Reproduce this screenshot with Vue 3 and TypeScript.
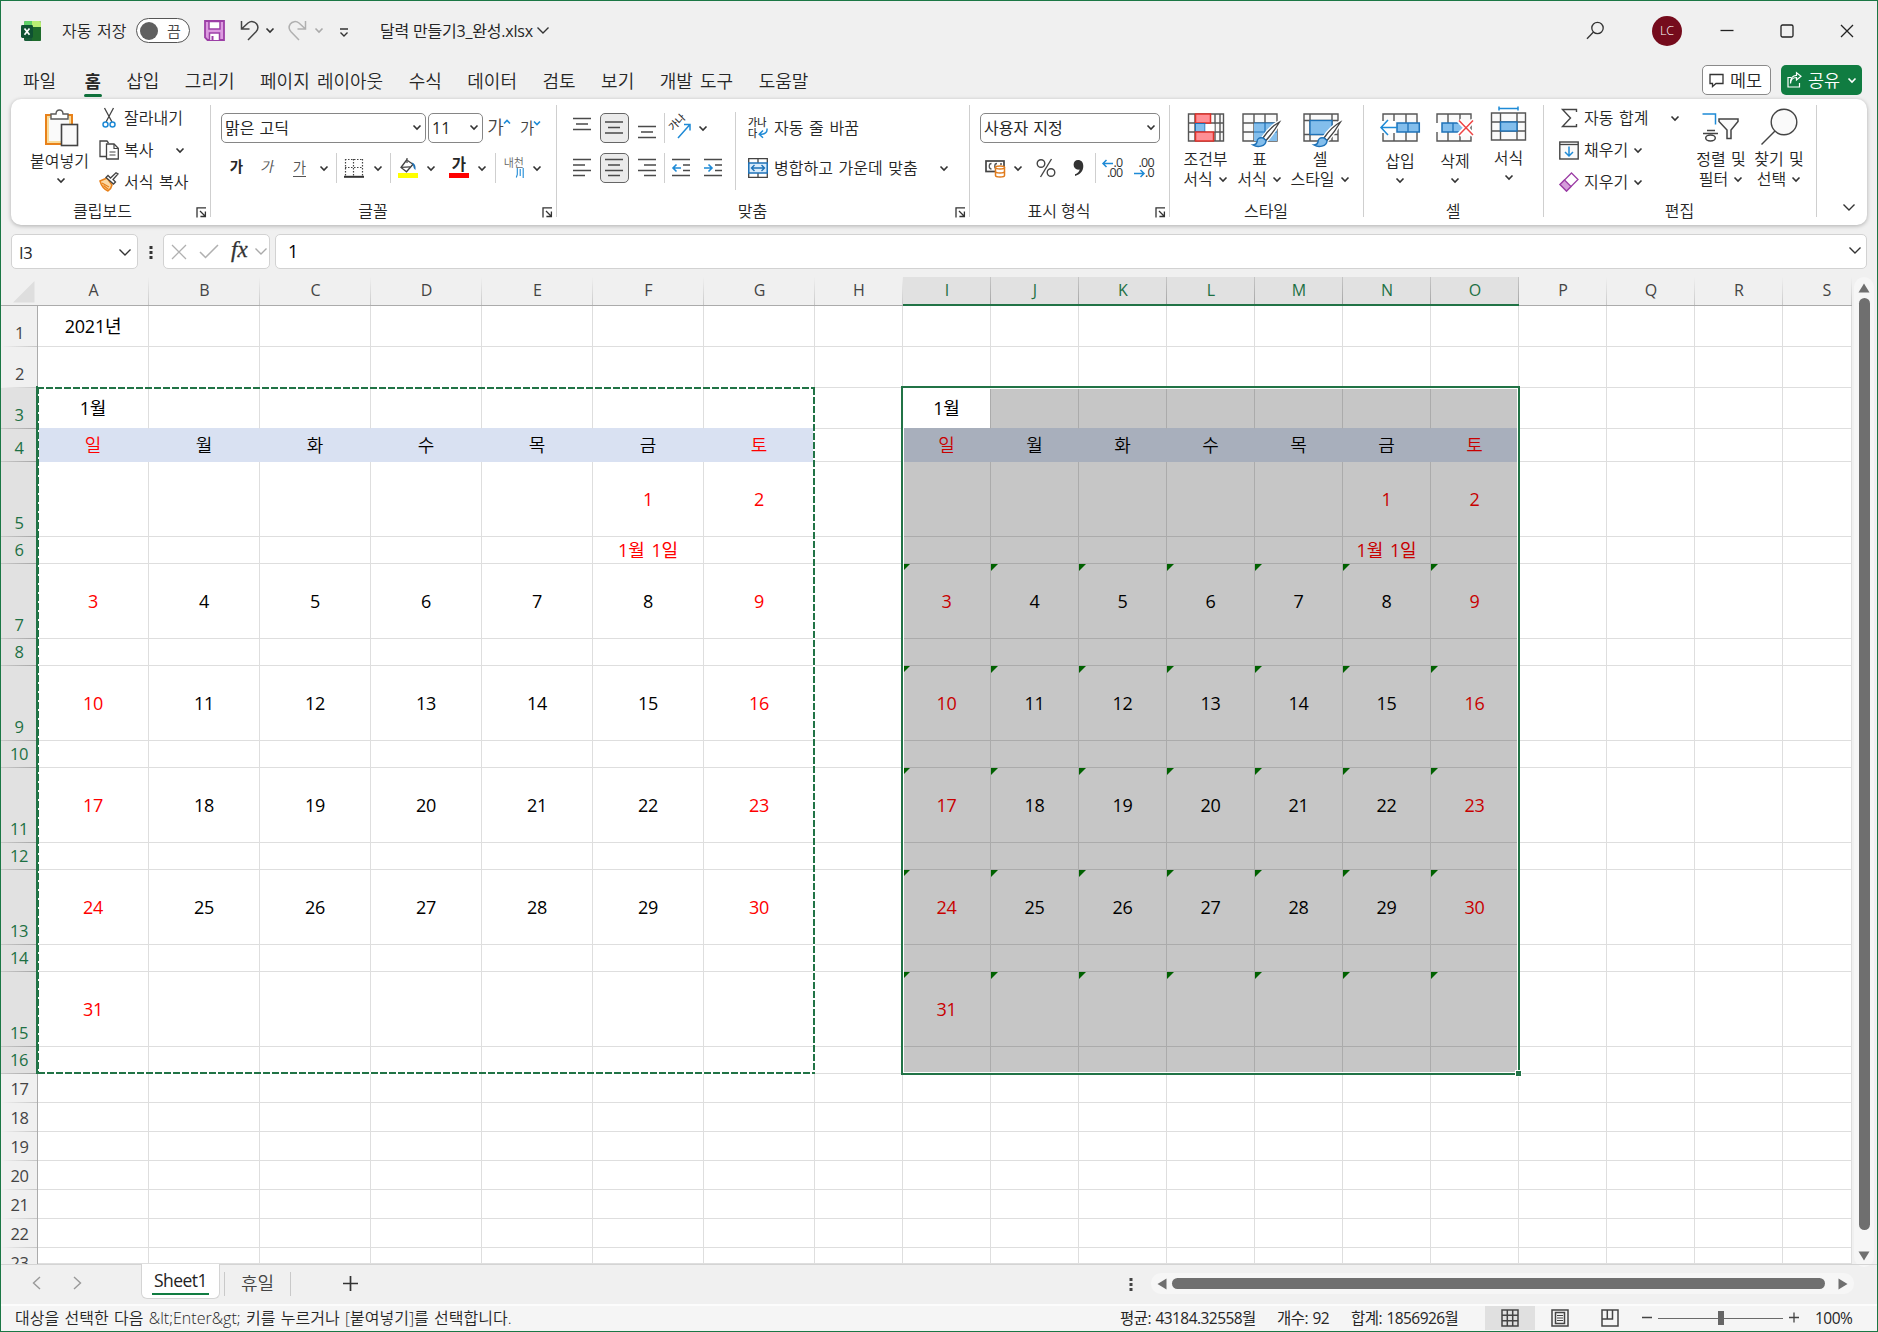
<script setup lang="ts">
import { h } from 'vue'

interface Col { name: string; width: number; selected: boolean }
interface Row { n: number; height: number; selected: boolean }

const cols: Col[] = 'ABCDEFGHIJKLMNOPQRS'.split('').map((name, i) => ({
  name,
  width: i < 7 ? 111 : name === 'S' ? 69 : 88,
  selected: i >= 8 && i <= 14,
}))

const heights = [41, 41, 41, 33, 75, 27, 75, 27, 75, 27, 75, 27, 75, 27, 75, 27, 29, 29, 29, 29, 29, 29, 16]
const rows: Row[] = heights.map((height, i) => ({ n: i + 1, height, selected: i >= 2 && i <= 15 }))

const weekdays = ['일', '월', '화', '수', '목', '금', '토']

function slot(c: number): number {
  if (c < 7) return c
  if (c >= 8 && c <= 14) return c - 8
  return -1
}

function cellText(r: number, c: number): string {
  if (r === 1 && c === 0) return '2021년'
  const d = slot(c)
  if (d < 0) return ''
  if (r === 3) return d === 0 ? '1월' : ''
  if (r === 4) return weekdays[d]
  if (r === 6 && d === 5) return '1월 1일'
  if (r >= 5 && r <= 15 && r % 2 === 1) {
    const day = ((r - 5) / 2) * 7 + d - 4
    return day >= 1 && day <= 31 ? String(day) : ''
  }
  return ''
}

function cellClass(r: number, c: number) {
  const d = slot(c)
  const block = d >= 0 && r >= 3 && r <= 16
  return {
    red: block && r > 3 && (d === 0 || d === 6 || (d === 5 && (r === 5 || r === 6))),
    week: block && r === 4,
    aboveweek: block && r === 3,
    sel: block && c >= 8 && !(r === 3 && c === 8),
    active: r === 3 && c === 8,
    err: block && c >= 8 && r >= 7 && r % 2 === 1,
  }
}

const tabs = ['파일', '홈', '삽입', '그리기', '페이지 레이아웃', '수식', '데이터', '검토', '보기', '개발 도구', '도움말']

const Chev = (p: { big?: boolean }) =>
  p.big
    ? h('svg', { width: 14, height: 9, viewBox: '0 0 14 9', class: 'ch' }, [h('path', { d: 'M1.5 1.5 7 7l5.5-5.5', fill: 'none', stroke: 'currentColor', 'stroke-width': 1.4 })])
    : h('svg', { width: 10, height: 7, viewBox: '0 0 10 7', class: 'ch' }, [h('path', { d: 'M1.5 1.5 5 5l3.5-3.5', fill: 'none', stroke: 'currentColor', 'stroke-width': 1.6 })])
Chev.props = { big: Boolean }

const Launch = () =>
  h('svg', { width: 11, height: 11, viewBox: '0 0 11 11' }, [
    h('path', { d: 'M1 10.5V.9h9M4 4l5 5M9.4 4.5v5h-5', fill: 'none', stroke: '#333', 'stroke-width': 1.3 }),
  ])
</script>

<template>
  <div class="win">
    <header class="title">
      <svg class="xl" width="20" height="20" viewBox="0 0 20 20">
        <rect x="3" y="0" width="17" height="20" rx="1.6" fill="#185c37" />
        <path d="M3 1.6A1.6 1.6 0 0 1 4.6 0H11v6H3z" fill="#5fd068" />
        <path d="M11 0h7.4A1.6 1.6 0 0 1 20 1.6V6h-9z" fill="#b9ef73" />
        <path d="M11 6h9v12.4a1.6 1.6 0 0 1-1.6 1.6H11z" fill="#1e6b2b" />
        <path d="M3 6h8v5H3z" fill="#2c8a3e" />
        <rect x="0" y="4" width="12" height="13" rx="1.4" fill="#0f5132" />
        <path d="M3.500 7.500l5 6.200M8.500 7.500l-5 6.200" stroke="#fff" stroke-width="1.700" />
      </svg>
      <span class="autosave">자동 저장</span>
      <span class="toggle"><i></i><b>끔</b></span>
      <svg class="save" width="21" height="21" viewBox="0 0 21 21">
        <path d="M1 1h19v19H3.500L1 17.500z" fill="#dc9be0" stroke="#9c3fa6" stroke-width="1.800" />
        <path d="M5 1.500h11V9H5z" fill="#fff" stroke="#9c3fa6" stroke-width="1.500" />
        <path d="M5.500 20v-7h10v7" fill="#fff" stroke="#9c3fa6" stroke-width="1.500" />
        <path d="M8.500 16v4" stroke="#9c3fa6" stroke-width="2" />
      </svg>
      <svg class="undo" width="20" height="21" viewBox="0 0 20 21">
        <path d="M1.500 1v8h8M1.800 8.800 8 3c3-2.300 6.800-1.600 8.700 1 1.800 2.600 1.300 5.500-.7 7.700L8 20" fill="none" stroke="#444" stroke-width="1.500" />
      </svg>
      <Chev class="c-undo" />
      <svg class="redo" width="20" height="21" viewBox="0 0 20 21">
        <path d="M18.500 1v8h-8M18.200 8.800 12 3C9 .7 5.200 1.400 3.300 4c-1.800 2.600-1.300 5.500.7 7.700L12 20" fill="none" stroke="#b0b0b0" stroke-width="1.500" />
      </svg>
      <Chev class="c-redo dim" />
      <svg class="qat" width="10" height="10" viewBox="0 0 10 10">
        <path d="M1 1h8M1.500 4.500 5 8l3.500-3.500" fill="none" stroke="#333" stroke-width="1.400" />
      </svg>
      <span class="doc">달력 만들기3_완성.xlsx</span>
      <Chev big class="c-doc" />
      <span class="grow"></span>
      <svg class="find" width="19" height="19" viewBox="0 0 19 19">
        <circle cx="11.500" cy="7" r="5.700" fill="none" stroke="#333" stroke-width="1.300" />
        <path d="M7.500 11 1 17.800" stroke="#333" stroke-width="1.300" />
      </svg>
      <span class="avatar">LC</span>
      <svg class="wbtn" width="14" height="14" viewBox="0 0 14 14"><path d="M.5 6.500h13" stroke="#222" stroke-width="1.300" /></svg>
      <svg class="wbtn" width="14" height="14" viewBox="0 0 14 14"><rect x="1" y="1" width="12" height="12" rx="1.500" fill="none" stroke="#222" stroke-width="1.300" /></svg>
      <svg class="wbtn" width="14" height="14" viewBox="0 0 14 14"><path d="M1 1l12 12M13 1 1 13" stroke="#222" stroke-width="1.300" /></svg>
    </header>

    <nav class="tabs">
      <span v-for="(t, i) in tabs" :key="t" class="tab" :class="{ on: i === 1 }">{{ t }}</span>
      <span class="grow"></span>
      <span class="memo">
        <svg width="15" height="15" viewBox="0 0 15 15"><path d="M1 1.500h13v9H7L3.500 13.500v-3H1z" fill="none" stroke="#333" stroke-width="1.300" /></svg>
        <b>메모</b>
      </span>
      <span class="share">
        <svg width="15" height="16" viewBox="0 0 15 16"><path d="M4 5.500H1V15h11.500v-4M3.500 11.500c.3-4 2.500-6 6-6V8L14 4.200 9.500.8v2.500C5.500 3.500 3 6.500 3.500 11.500z" fill="none" stroke="#fff" stroke-width="1.200" /></svg>
        <b>공유</b>
        <Chev />
      </span>
    </nav>

    <section class="ribbon">
      <!-- clipboard -->
      <div class="group g1">
        <div class="body">
          <div class="bigbtn paste">
            <svg width="36" height="38" viewBox="0 0 36 38">
              <path d="M2 6h26v29H2z" fill="#f9dc9b" stroke="#e8811a" stroke-width="2" />
              <path d="M5 9h20v23H5z" fill="#fafafa" />
              <path d="M7 10V5h5c.2-5.300 6.800-5.300 7 0h5v5z" fill="#fff" stroke="#5a5a5a" stroke-width="1.400" />
              <rect x="17.500" y="15.500" width="16" height="21" fill="#fafafa" stroke="#444" stroke-width="1.600" />
            </svg>
            <span>붙여넣기</span>
            <Chev />
          </div>
          <div class="lines">
            <div class="line">
              <svg width="20" height="22" viewBox="0 0 20 22">
                <path d="M5.500 1 13 15M14.500 1 7 15" stroke="#444" stroke-width="1.300" />
                <circle cx="6.500" cy="17.500" r="2.500" fill="#fff" stroke="#1e8ad6" stroke-width="1.500" />
                <circle cx="13.500" cy="17.500" r="2.500" fill="#fff" stroke="#1e8ad6" stroke-width="1.500" />
              </svg>
              <span>잘라내기</span>
            </div>
            <div class="line">
              <svg width="20" height="20" viewBox="0 0 20 20">
                <path d="M8 16.500H1V1h7l1.500 2" fill="#fff" stroke="#444" stroke-width="1.300" />
                <path d="M7.500 4H15l4.300 4.300V19H7.500z" fill="#fff" stroke="#444" stroke-width="1.300" />
                <path d="M15 4v4.500h4.300M10.500 12h6M10.500 15h6" fill="none" stroke="#444" stroke-width="1.200" />
              </svg>
              <span class="w51">복사</span>
              <Chev />
            </div>
            <div class="line">
              <svg width="20" height="20" viewBox="0 0 20 20">
                <path d="M8 6 1 9c1 3.500 3.500 8 8 10 2-1.500 3.500-3.500 4-6z" fill="#fbd9a5" stroke="#e8811a" stroke-width="1.500" />
                <path d="M3 11l7 4M4.500 13.500l5 4" stroke="#e8811a" stroke-width="1.300" />
                <path d="M7 5.500 14.500 12l2-2-2.500-2.500 5-5.500L17 .8 11.500 6 9 3.500z" fill="#fff" stroke="#444" stroke-width="1.300" />
              </svg>
              <span>서식 복사</span>
            </div>
          </div>
        </div>
        <div class="cap"><span>클립보드</span><Launch /></div>
      </div>

      <!-- font -->
      <div class="group g2">
        <div class="body stack">
          <div class="r r21">
            <div class="combo"><span>맑은 고딕</span><Chev /></div>
            <div class="combo"><span>11</span><Chev /></div>
            <span class="ga big">가<svg width="8" height="6" viewBox="0 0 8 6"><path d="M1 4.500 4 1.500l3 3" fill="none" stroke="#1e8ad6" stroke-width="1.600" /></svg></span>
            <span class="ga">가<svg width="8" height="6" viewBox="0 0 8 6"><path d="M1 1.500 4 4.500l3-3" fill="none" stroke="#1e8ad6" stroke-width="1.600" /></svg></span>
          </div>
          <div class="r r22">
            <span class="fb">가</span>
            <span class="fi">가</span>
            <span class="fu">가</span>
            <Chev />
            <i class="sep"></i>
            <svg width="20" height="20" viewBox="0 0 20 20">
              <path d="M1 1.500h18M1 9.500h18M1.500 1v17M9.500 1v17M18.500 1v17" stroke="#444" stroke-width="1.200" stroke-dasharray="1.500 1.500" />
              <path d="M0 18.800h20" stroke="#333" stroke-width="2" />
            </svg>
            <Chev />
            <i class="sep"></i>
            <svg width="20" height="20" viewBox="0 0 20 20">
              <path d="M9 1.500 3 9.500l5.500 4.300 6.500-7.500L9.500 2.500" fill="#fff" stroke="#444" stroke-width="1.300" />
              <path d="M9 0v5M3.200 9.300l9-.5" stroke="#444" stroke-width="1.200" fill="none" />
              <path d="M13.500 4.500c3 .5 4.500 3 4 7.500-1.800-1-2-3-2.500-5z" fill="#1e72b8" />
              <rect x="0" y="15" width="20" height="5" fill="#ffff00" />
            </svg>
            <Chev />
            <span class="fc">가<i></i></span>
            <Chev />
            <i class="sep"></i>
            <span class="ruby"><em>내천</em><svg width="8" height="10" viewBox="0 0 8 10"><path d="M1.300 0v6.500L.3 9.500M4.200 1v7M7.200 0v10" fill="none" stroke="#1e8ad6" stroke-width="1.100" /></svg></span>
            <Chev />
          </div>
        </div>
        <div class="cap"><span>글꼴</span><Launch /></div>
      </div>

      <!-- alignment -->
      <div class="group g3">
        <div class="body">
          <div class="stack al">
            <div class="r r31">
              <svg width="18" height="22" viewBox="0 0 18 22"><path d="M0 1.500h18M3 7h12M0 12.500h18" class="ln" /></svg>
              <span class="press"><svg width="18" height="22" viewBox="0 0 18 22"><path d="M0 5h18M3 10.500h12M0 16h18" class="ln" /></svg></span>
              <svg width="18" height="22" viewBox="0 0 18 22"><path d="M0 9.500h18M3 15h12M0 20.500h18" class="ln" /></svg>
              <i class="sep"></i>
              <svg width="20" height="22" viewBox="0 0 20 22">
                <text x="-2" y="11" font-size="10" font-weight="500" transform="rotate(-45 4 8)" fill="#333">가나</text>
                <path d="M7 21 18.500 8M13 7.500h6v6" fill="none" stroke="#1e8ad6" stroke-width="1.500" />
              </svg>
              <Chev />
            </div>
            <div class="r r32">
              <svg width="18" height="20" viewBox="0 0 18 20"><path d="M0 1.500h18M0 7h12M0 12.500h18M0 17.500h12" class="ln" /></svg>
              <span class="press"><svg width="18" height="20" viewBox="0 0 18 20"><path d="M0 1.500h18M3 7h12M0 12.500h18M3 17.500h12" class="ln" /></svg></span>
              <svg width="18" height="20" viewBox="0 0 18 20"><path d="M0 1.500h18M6 7h12M0 12.500h18M6 17.500h12" class="ln" /></svg>
              <i class="sep"></i>
              <svg width="18" height="20" viewBox="0 0 18 20"><path d="M0 1.500h18M11 7h7M11 12.500h7M0 17.500h18" class="ln" /><path d="M9 10H1M4.500 6.500 1 10l3.500 3.500" fill="none" stroke="#1e8ad6" stroke-width="1.600" /></svg>
              <svg width="18" height="20" viewBox="0 0 18 20"><path d="M0 1.500h18M11 7h7M11 12.500h7M0 17.500h18" class="ln" /><path d="M0 10h8M4.500 6.500 8 10l-3.500 3.500" fill="none" stroke="#1e8ad6" stroke-width="1.600" /></svg>
            </div>
          </div>
          <i class="sep tall"></i>
          <div class="stack">
            <div class="r r33">
              <svg width="20" height="22" viewBox="0 0 20 22">
                <text x="0" y="8.500" font-size="10" font-weight="500" fill="#333">가나</text>
                <text x="0" y="20" font-size="10" font-weight="500" fill="#333">다</text>
                <path d="M19 11.500c.5 4-2 5.800-7.500 5.800M15 13.500l-3.800 3.800 3.800 3.500" fill="none" stroke="#1e8ad6" stroke-width="1.500" />
              </svg>
              <span>자동 줄 바꿈</span>
            </div>
            <div class="r r33">
              <svg width="20" height="20" viewBox="0 0 20 20">
                <path d="M.7.700h18.600v18.600H.7zM10 .7v5M10 14.500v5" fill="#fff" stroke="#444" stroke-width="1.300" />
                <rect x=".8" y="5" width="18.400" height="10" fill="#d9ecfb" stroke="#1e72b8" stroke-width="1.500" />
                <path d="M3.500 10h13M6.500 7l-3 3 3 3M13.500 7l3 3-3 3" fill="none" stroke="#1e72b8" stroke-width="1.400" />
              </svg>
              <span>병합하고 가운데 맞춤</span>
              <Chev />
            </div>
          </div>
        </div>
        <div class="cap"><span>맞춤</span><Launch /></div>
      </div>

      <!-- number -->
      <div class="group g4">
        <div class="body stack">
          <div class="combo"><span>사용자 지정</span><Chev /></div>
          <div class="r r42">
            <svg width="20" height="19" viewBox="0 0 20 19">
              <rect x="1" y="2" width="18" height="10.500" fill="#fff" stroke="#444" stroke-width="1.700" />
              <path d="M6.500 4.500c-3 0-3 5.500 0 5.500M12 4.500c-3 0-3 5.500 0 5.500M15 5h2" fill="none" stroke="#555" stroke-width="1.300" />
              <path d="M10.500 8.500v8c0 2 9 2 9 0v-8z" fill="#fff" stroke="#e07b1c" stroke-width="1.500" />
              <ellipse cx="15" cy="8.500" rx="4.500" ry="1.500" fill="#fff" stroke="#e07b1c" stroke-width="1.400" />
              <path d="M10.500 12.500c0 2 9 2 9 0" fill="none" stroke="#e07b1c" stroke-width="1.400" />
            </svg>
            <Chev />
            <svg width="20" height="20" viewBox="0 0 20 20"><g fill="none" stroke="#444" stroke-width="1.400"><circle cx="5" cy="5.500" r="3.800" /><circle cx="15" cy="14.500" r="3.800" /><path d="M15.500 1 4.500 19" /></g></svg>
            <svg width="11" height="18" viewBox="0 0 11 18"><path d="M5 1c3.300 0 5.300 2.200 5.300 6 0 5-3 8.500-8.300 10v-1.700c2.800-1 4.300-2.800 4.600-4.800-3 .7-6-1-6-4.700C.6 2.800 2.500 1 5 1z" fill="#333" /></svg>
            <i class="sep"></i>
            <span class="dec"><em><svg width="11" height="9" viewBox="0 0 11 9"><path d="M11 4.500H1M4.500 1 1 4.500 4.500 8" fill="none" stroke="#1e8ad6" stroke-width="1.500" /></svg>.0</em><em>.00</em></span>
            <span class="dec"><em>.00</em><em><svg width="11" height="9" viewBox="0 0 11 9"><path d="M0 4.500h10M6.500 1 10 4.500 6.500 8" fill="none" stroke="#1e8ad6" stroke-width="1.500" /></svg>.0</em></span>
          </div>
        </div>
        <div class="cap"><span>표시 형식</span><Launch /></div>
      </div>

      <!-- styles -->
      <div class="group g5">
        <div class="body bigs">
          <div class="bigbtn">
            <svg width="38" height="34" viewBox="0 0 38 34">
              <path d="M1.500 1h35v27h-35zM1.500 10h35M1.500 19h35M8 1v27M28 1v27M33 1v27" class="tb" />
              <rect x="8.500" y="1" width="15" height="9" fill="#ff8f95" stroke="#e0322b" stroke-width="1.500" />
              <rect x="8.500" y="10.500" width="9.500" height="8" fill="#83beec" stroke="#1e72b8" stroke-width="1" />
              <path d="M18.500 11h9v7.500h-9z" fill="#fff" />
              <rect x="8.500" y="19" width="18" height="9" fill="#ff8f95" stroke="#e0322b" stroke-width="1.500" />
            </svg>
            <span>조건부</span>
            <span class="two">서식<Chev /></span>
          </div>
          <div class="bigbtn">
            <svg class="nudge1" width="38" height="34" viewBox="0 0 38 34">
              <path d="M1 1h34v27H1zM1 10h34M1 19h34M12 1v27M23 1v27" class="tb" />
              <path d="M12 10h23v18H12z" fill="#83beec" />
              <path d="M12 19h23M23 10v18M12 10h23" stroke="#1e72b8" stroke-width="1.200" />
              <path d="M37.500 9C32 12 25 19 21 25l3 2.500C29 22 34 15 37.500 9z" fill="#fff" stroke="#fff" stroke-width="4" />
              <path d="M37.500 9C32 12 25 19 21 25l3 2.500C29 22 34 15 37.500 9z" fill="#fff" stroke="#444" stroke-width="1.400" />
              <path d="M21 25c-4-1-6 1-6 4-.5 2-1.500 3-4 3 4 2.500 13 2 13-4.500z" fill="#83beec" stroke="#1e72b8" stroke-width="1.400" />
            </svg>
            <span>표</span>
            <span class="two">서식<Chev /></span>
          </div>
          <div class="bigbtn">
            <svg class="nudge2" width="38" height="34" viewBox="0 0 38 34">
              <path d="M1 1h34v27H1zM1 7.500h34M1 21.500h34M7 1v27M29 1v27" class="tb" />
              <rect x="7" y="7.500" width="22" height="14" fill="#83beec" stroke="#1e72b8" stroke-width="1.300" />
              <path d="M37.500 9C32 12 25 19 21 25l3 2.500C29 22 34 15 37.500 9z" fill="#fff" stroke="#fff" stroke-width="4" />
              <path d="M37.500 9C32 12 25 19 21 25l3 2.500C29 22 34 15 37.500 9z" fill="#fff" stroke="#444" stroke-width="1.400" />
              <path d="M21 25c-4-1-6 1-6 4-.5 2-1.500 3-4 3 4 2.500 13 2 13-4.500z" fill="#83beec" stroke="#1e72b8" stroke-width="1.400" />
            </svg>
            <span>셀</span>
            <span class="two">스타일<Chev /></span>
          </div>
        </div>
        <div class="cap full"><span>스타일</span></div>
      </div>

      <!-- cells -->
      <div class="group g6">
        <div class="body bigs">
          <div class="bigbtn lo">
            <svg width="40" height="34" viewBox="0 0 40 34">
              <path d="M3 1h34v27H3zM14 1v27M26 1v27" class="tb" />
              <rect x="0" y="8" width="15" height="12" fill="#fff" />
              <path d="M17 10h22.300v9H17z" fill="#83beec" stroke="#1e72b8" stroke-width="1.500" />
              <path d="M28 10v9" stroke="#1e72b8" stroke-width="1.300" />
              <path d="M18 14.500H1M8 7l-7 7.500L8 22" fill="none" stroke="#1e8ad6" stroke-width="1.500" />
            </svg>
            <span>삽입</span>
            <Chev />
          </div>
          <div class="bigbtn lo">
            <svg width="38" height="34" viewBox="0 0 38 34">
              <path d="M1 1h34v27H1zM12 1v27M24 1v27" class="tb" />
              <rect x="0" y="10" width="6" height="9" fill="#fff" />
              <path d="M6 10h18l4 4.500-4 4.500H6z" fill="#83beec" stroke="#1e72b8" stroke-width="1.500" />
              <path d="M17 10v9" stroke="#1e72b8" stroke-width="1.300" />
              <path d="M23 7.500 37 22M37 7.500 23 22" stroke="#fff" stroke-width="5" />
              <path d="M23 7.500 37 22M37 7.500 23 22" stroke="#ee4444" stroke-width="1.500" />
            </svg>
            <span>삭제</span>
            <Chev />
          </div>
          <div class="bigbtn fmt">
            <svg width="38" height="36" viewBox="0 0 38 36">
              <path d="M1.500 7h34v27h-34zM1.500 16h34M1.500 25h34M10.500 7v27M27 7v27" class="tb" />
              <rect x="10.500" y="16" width="16.500" height="9" fill="#83beec" stroke="#1e72b8" stroke-width="1.400" />
              <path d="M9 2.500h19M9 .5v4M28 .5v4" stroke="#1e8ad6" stroke-width="1.500" />
            </svg>
            <span>서식</span>
            <Chev />
          </div>
        </div>
        <div class="cap full"><span>셀</span></div>
      </div>

      <!-- editing -->
      <div class="group g7">
        <div class="body">
          <div class="lines">
            <div class="line">
              <svg width="20" height="20" viewBox="0 0 20 20"><path d="M17.500 4V1.500h-14l8 8.500-8 8.500h14V16" fill="none" stroke="#444" stroke-width="1.400" /></svg>
              <span class="w85">자동 합계</span>
              <Chev />
            </div>
            <div class="line">
              <svg width="20" height="19" viewBox="0 0 20 19">
                <rect x=".8" y="1" width="18.400" height="17" fill="#fafafa" stroke="#444" stroke-width="1.400" />
                <path d="M1 3.500h18" stroke="#444" stroke-width="1.300" />
                <path d="M10 5.500v9M6 11l4 4 4-4" fill="none" stroke="#1e8ad6" stroke-width="1.500" />
              </svg>
              <span class="w48">채우기</span>
              <Chev />
            </div>
            <div class="line">
              <svg width="20" height="20" viewBox="0 0 20 20">
                <path d="M12.500 1 19 7.500 7.500 19 1 12.500z" fill="#fff" stroke="#9c3fa6" stroke-width="1.300" />
                <path d="M5.500 8 12 14.500 7.500 19 1 12.500z" fill="#d59ddb" stroke="#9c3fa6" stroke-width="1.300" />
              </svg>
              <span class="w48">지우기</span>
              <Chev />
            </div>
          </div>
          <div class="bigs two-up">
            <div class="bigbtn">
              <svg width="38" height="34" viewBox="0 0 38 34">
                <path d="M.5 1h13v10.500" fill="none" stroke="#1e8ad6" stroke-width="1.500" />
                <path d="M5 17.500h8M1 20.500h15" stroke="#444" stroke-width="1.400" fill="none" />
                <ellipse cx="8.500" cy="25" rx="4.800" ry="3" fill="none" stroke="#444" stroke-width="1.500" />
                <path d="M17 6h19v2.500L29 17v8.500h-4V17l-8-8.500z" fill="#fafafa" stroke="#444" stroke-width="1.500" />
              </svg>
              <span>정렬 및</span>
              <span class="two">필터<Chev /></span>
            </div>
            <div class="bigbtn glass">
              <svg width="38" height="38" viewBox="0 0 38 38">
                <circle cx="24" cy="14" r="12.800" fill="#fafafa" stroke="#444" stroke-width="1.400" />
                <path d="M15 23 1.500 36.500" stroke="#444" stroke-width="1.500" />
              </svg>
              <span>찾기 및</span>
              <span class="two">선택<Chev /></span>
            </div>
          </div>
        </div>
        <div class="cap full"><span>편집</span></div>
      </div>
      <div class="collapse"><Chev big /></div>
    </section>

    <section class="fbar">
      <div class="namebox"><span>I3</span><Chev big /></div>
      <svg class="dots" width="4" height="14" viewBox="0 0 4 14"><path d="M.5 0h3v3h-3zM.5 5h3v3h-3zM.5 10h3v3h-3z" fill="#333" /></svg>
      <div class="fxbox">
        <svg width="16" height="16" viewBox="0 0 16 16"><path d="M1 1l14 14M15 1 1 15" stroke="#b0b0b0" stroke-width="1.300" /></svg>
        <svg width="20" height="15" viewBox="0 0 20 15"><path d="M1 8l5.500 5.500L19 1" fill="none" stroke="#b0b0b0" stroke-width="1.500" /></svg>
        <span class="fx">fx</span>
        <Chev big class="dim" />
      </div>
      <div class="input"><span>1</span><Chev big /></div>
    </section>

    <section class="work">
      <div class="sheet">
        <div class="hrow">
          <div class="corner"><svg width="22" height="22" viewBox="0 0 22 22"><path d="M21.500 0v21.500H0z" fill="#dedede" /></svg></div>
          <div v-for="c in cols" :key="c.name" class="hcol" :class="{ on: c.selected, last: c.name === 'S' }" :style="{ width: c.width + 'px' }"><span>{{ c.name }}</span></div>
        </div>
        <div v-for="r in rows" :key="r.n" class="row" :style="{ height: r.height + 'px' }">
          <div class="rh" :class="{ on: r.selected, cut: r.n === 23 }"><span>{{ r.n }}</span></div>
          <div v-for="(c, ci) in cols" :key="c.name" class="cell" :class="cellClass(r.n, ci)" :style="{ width: c.width + 'px' }">{{ cellText(r.n, ci) }}</div>
        </div>
        <svg class="ants" width="780" height="690" viewBox="0 0 780 690">
          <g stroke="#fff" stroke-width="2"><path d="M1 2h778M2 1v686M778 1v686M1 687h778" /></g>
          <path d="M0 0h2v688H0z" fill="#217346" />
          <g stroke="#217346" stroke-width="2" stroke-dasharray="7 2"><path d="M1 2h778M2 1v686M778 2v685M2 687h777" /></g>
        </svg>
        <div class="selbox"><i></i></div>
      </div>
      <div class="vbar">
        <svg width="12" height="10" viewBox="0 0 12 10"><path d="M6 .5 11.500 9.500H.5z" fill="#6f6f6f" /></svg>
        <i></i>
        <svg width="12" height="10" viewBox="0 0 12 10"><path d="M6 9.500 11.500.5H.5z" fill="#6f6f6f" /></svg>
      </div>
    </section>

    <footer class="sheets">
      <svg class="nv" width="9" height="14" viewBox="0 0 9 14"><path d="M8 1 1.500 7 8 13" fill="none" stroke="#999" stroke-width="1.400" /></svg>
      <svg class="nv n2" width="9" height="14" viewBox="0 0 9 14"><path d="M1 1l6.500 6L1 13" fill="none" stroke="#999" stroke-width="1.400" /></svg>
      <div class="stab on"><span>Sheet1</span></div>
      <i class="ssep"></i>
      <div class="stab"><span>휴일</span></div>
      <i class="ssep s2nd"></i>
      <svg class="plus" width="15" height="15" viewBox="0 0 15 15"><path d="M0 7.500h15M7.500 0v15" stroke="#333" stroke-width="1.700" /></svg>
      <span class="grow"></span>
      <svg class="sdots" width="4" height="14" viewBox="0 0 4 14"><path d="M.5 0h3v3h-3zM.5 5h3v3h-3zM.5 10h3v3h-3z" fill="#444" /></svg>
      <div class="hbar">
        <svg width="10" height="12" viewBox="0 0 10 12"><path d="M.5 6 9.500.5v11z" fill="#6f6f6f" /></svg>
        <i></i>
        <svg width="10" height="12" viewBox="0 0 10 12"><path d="M9.500 6 .5.5v11z" fill="#6f6f6f" /></svg>
      </div>
    </footer>

    <footer class="status">
      <span class="msg">대상을 선택한 다음 &amp;lt;Enter&amp;gt; 키를 누르거나 [붙여넣기]를 선택합니다.</span>
      <span class="grow"></span>
      <span class="s1">평균: 43184.32558월</span>
      <span class="s2">개수: 92</span>
      <span class="s3">합계: 1856926월</span>
      <div class="view on"><svg width="18" height="18" viewBox="0 0 18 18"><path d="M1 1h16v16H1zM1 6.300h16M1 11.700h16M6.300 1v16M11.700 1v16" fill="none" stroke="#444" stroke-width="1.500" /></svg></div>
      <div class="view"><svg width="18" height="18" viewBox="0 0 18 18"><path d="M1 1h16v16H1zM4.500 3.500h9v11h-9z" fill="none" stroke="#444" stroke-width="1.500" /><path d="M6 6.500h6M6 9h6M6 11.500h6" stroke="#444" stroke-width="1.200" /></svg></div>
      <div class="view"><svg width="18" height="18" viewBox="0 0 18 18"><path d="M1 1h16v16H1zM1 10h10.500V1M6.300 1v9" fill="none" stroke="#444" stroke-width="1.500" /></svg></div>
      <svg class="zoom" width="160" height="16" viewBox="0 0 160 16">
        <path d="M1 7.500h10M148 7.500h10M153 2.500v10" stroke="#444" stroke-width="1.300" />
        <path d="M17 8.500h125" stroke="#6a6a6a" stroke-width="1" />
        <rect x="77" y="1" width="6" height="14" fill="#666" />
      </svg>
      <span class="pct">100%</span>
    </footer>
  </div>
</template>

<style>
body { margin: 0; background: #f0f0f0; }
</style>

<style scoped>
* { box-sizing: border-box; }
svg { display: block; flex: none; overflow: visible; }
.win {
  width: 1878px; height: 1332px; border: 1px solid #1b7745; background: #f0f0f0; overflow: hidden;
  display: flex; flex-direction: column; color: #262626; font-size: 16px; line-height: 20px;
  font-family: "Open Sans", "Noto Sans CJK KR", sans-serif; white-space: nowrap; font-weight: 350;
}
i, em { font-style: normal; }
b { font-weight: inherit; }
.grow { flex: 1; }
.ch { color: #333; }
.dim { color: #aaa; }
.tb { fill: #fafafa; stroke: #555; stroke-width: 1.4; }
.ln { stroke: #4a4a4a; stroke-width: 1.5; fill: none; }
.nudge1 { margin-left: 2px; }
.nudge2 { margin-left: 4px; }

.title { height: 61px; flex: none; display: flex; align-items: center; padding: 0 23px 2px 20px; }
.autosave { width: 64px; margin-left: 21px; word-spacing: 1.5px; }
.toggle { width: 54px; height: 25px; margin-left: 10px; border: 1px solid #555; border-radius: 13px; background: #fff; display: flex; align-items: center; padding-left: 3px; }
.toggle i { width: 18px; height: 18px; border-radius: 50%; background: #606060; }
.toggle b { margin-left: 9px; font-size: 15px; color: #444; }
.save { margin-left: 14px; }
.undo { margin-left: 15px; }
.c-undo { margin-left: 5px; }
.redo { margin-left: 12px; }
.c-redo { margin-left: 7px; }
.qat { margin-left: 15px; margin-top: 4px; }
.doc { margin-left: 31px; width: 152px; letter-spacing: -.2px; font-weight: 400; }
.c-doc { margin-left: 4px; }
.find { margin-right: 47px; }
.avatar { width: 30px; height: 30px; border-radius: 50%; background: #750b1c; color: #fff; font-size: 12.5px; line-height: 30px; text-align: center; margin-right: 38px; }
.wbtn { margin-right: 46px; }
.wbtn:last-child { margin-right: 0; }

.tabs { height: 37px; flex: none; display: flex; padding: 3px 15px 0 22px; gap: 25.5px; font-size: 18px; word-spacing: 2.5px; }
.tab { height: 31px; line-height: 33px; position: relative; }
.tab.on { font-weight: 600; font-size: 17.5px; margin-left: 3px; }
.tab.on::after { content: ""; position: absolute; left: -1px; right: -1px; bottom: -1px; height: 3px; border-radius: 2px; background: #0f703b; }
.memo { height: 30px; width: 69px; border: 1px solid #8a8a8a; border-radius: 5px; background: #fff; display: flex; align-items: center; padding-left: 6px; gap: 6px; margin-right: -15.5px; font-size: 17.5px; }
.share { height: 30px; width: 81px; border-radius: 5px; background: #107c41; color: #fff; display: flex; align-items: center; padding-left: 6px; gap: 6px; font-size: 17.5px; }
.share .ch { color: #fff; margin-left: 1px; }

.ribbon { height: 126px; margin: 0 10px; flex: none; background: #fff; border-radius: 10px; display: flex; box-shadow: 0 1px 4px rgba(0, 0, 0, .28); }
.group { position: relative; display: flex; flex-direction: column; flex: none; }
.group::after { content: ""; position: absolute; right: 0; top: 6px; width: 1px; height: 112px; background: #cfcfcf; }
.g1 { width: 200px; } .g2 { width: 346px; } .g3 { width: 413px; } .g4 { width: 200px; }
.g5 { width: 194px; } .g6 { width: 180px; } .g7 { width: 273px; }
.body { height: 101px; display: flex; flex: none; }
.stack { display: flex; flex-direction: column; gap: 10px; padding-top: 14px; }
.cap { height: 22px; display: grid; grid-template-columns: 1fr 22px; align-items: center; text-align: center; }
.cap svg { margin: 2px 0 0 7px; }
.g1 .cap { padding-left: 5px; }
.cap.full { grid-template-columns: 1fr; }
.g5 .cap, .g6 .cap, .g7 .cap { padding-right: 2px; }
.r { display: grid; height: 30px; align-items: center; justify-items: center; }
.sep { width: 1px; height: 30px; background: #cfcfcf; }
.sep.tall { height: 78px; margin-top: 13px; }
.combo { height: 30px; border: 1px solid #868686; border-radius: 5px; background: #fff; width: 100%; display: flex; justify-content: space-between; align-items: center; padding: 0 3px 1px; word-spacing: 1px; font-weight: 400; }
.press { width: 29px; height: 30px; border: 1px solid #666; border-radius: 5px; background: #ebebeb; display: grid; place-items: center; }

.paste { width: 78px; padding: 10px 0 0 18px; }
.bigbtn { display: flex; flex-direction: column; align-items: center; }
.paste svg:first-child { margin: 0 0 4px 6px; }
.paste span { margin-left: 1px; }
.paste .ch { margin-top: 6px; margin-left: 4px; }
.lines { padding-top: 3px; }
.g1 .lines { padding-left: 10px; }
.line { height: 32px; display: grid; grid-template-columns: 20px auto auto; column-gap: 5px; align-items: center; justify-content: start; word-spacing: 1.5px; }
.w51 { width: 46px; } .w85 { width: 81px; } .w48 { width: 44px; }

.r21 { grid-template-columns: 205px 55px 26px 24px; column-gap: 2px; margin-left: 10px; }
.ga { color: #444; font-size: 15.5px; display: flex; margin-left: 11px; }
.ga.big { font-size: 18px; margin: -2px 0 0 2px; }
.ga svg { margin: 2px 0 0 -1px; }
.r22 { margin-left: 10px; grid-template-columns: 31px 31px 33px 15px 11px 23px 25px 1px 34px 12px 44px 2px 25px 10px 37px; }
.fb { font-weight: 600; font-size: 14.5px; margin-top: -3px; }
.fi { font-size: 14.5px; transform: skewX(-12deg); color: #555; margin-top: -3px; }
.fu { font-size: 14.5px; border-bottom: 1.5px solid #555; line-height: 17px; color: #555; margin-top: -1px; }
.fc { width: 20px; height: 20px; font-size: 15.5px; font-weight: 600; line-height: 12px; text-align: center; display: flex; flex-direction: column; justify-content: space-between; }
.fc i { height: 5px; background: #f00; }
.ruby { display: flex; flex-direction: column; align-items: flex-end; width: 22px; color: #666; margin-top: -2px; }
.ruby em { font-size: 11px; line-height: 11px; }

.al { width: 178px; }
.r31, .r32 { margin-left: 10px; grid-template-columns: 30px 34px 31px 4px 30px 13px; }
.r32 { grid-template-columns: 30px 34px 31px 4px 30px 34px; }
.r33 { margin-left: 12px; grid-template-columns: 20px 165px 21px; justify-items: start; word-spacing: 1.5px; }
.r33 span { padding-left: 6px; }
.r33 .ch { justify-self: center; }

.g4 .combo { width: 180px; margin-left: 10px; }
.r42 { margin-left: 10px; grid-template-columns: 30px 16px 40px 25px 8px 27px 36px; }
.dec { width: 20px; font-size: 12.5px; line-height: 10px; color: #333; display: flex; flex-direction: column; align-items: flex-end; letter-spacing: -.7px; font-weight: 400; }
.dec em { display: flex; align-items: center; height: 10px; }

.bigs { display: grid; padding-top: 14px; align-items: start; }
.bigbtn > span { height: 20px; }
.bigs .bigbtn > svg:first-child { margin-bottom: 2px; }
.g5 .bigs { grid-template-columns: 53px 55px 66px; padding-left: 9px; }
.g6 .bigs { grid-template-columns: 54px 56px 51px; padding-left: 9px; }
.two { display: flex; align-items: center; gap: 5px; }
.lo > svg:first-child { margin-bottom: 4px !important; }
.lo .ch, .fmt .ch { margin-top: 6px; }
.fmt { margin-top: -7px; }
.fmt > svg:first-child { margin-bottom: 6px !important; }
.g7 .lines { width: 150px; padding-left: 15px; }
.two-up { grid-template-columns: 54px 62px; word-spacing: 1px; }
.glass { margin-top: -5px; }
.glass > svg:first-child { margin-bottom: 3px !important; }
.collapse { flex: 1; display: flex; align-items: center; justify-content: center; padding: 90px 0 0 14px; }

.fbar { flex: none; height: 52px; display: flex; padding: 9px 10px 0; }
.namebox, .fxbox, .input { height: 35px; background: #fff; border: 1px solid #d2d2d2; border-radius: 5px; display: flex; align-items: center; }
.namebox { width: 127px; justify-content: space-between; padding: 2px 5px 0 7px; font-size: 16.5px; font-weight: 400; letter-spacing: -.4px; }
.dots { margin: 12px 10px 0 11px; }
.fxbox { width: 107px; padding-left: 7px; margin-left: 0; }
.fxbox svg:nth-child(2) { margin-left: 12px; }
.fx { font: italic 23px/24px "Liberation Serif", serif; margin: -4px 0 0 12px; width: 20px; color: #333; -webkit-text-stroke: .3px #333; }
.fxbox .ch { margin-left: 3px; }
.input { margin-left: 5px; flex: 1; justify-content: space-between; padding: 0 4px 2px 12px; font-size: 18px; color: #000; font-weight: 400; }

.work { flex: none; height: 987px; display: flex; }
.sheet { width: 1851px; position: relative; overflow: hidden; flex: none; font-weight: 400; }
.hrow { display: flex; height: 29px; border-bottom: 1px solid #ababab; }
.corner { width: 37px; padding: 4px 0 0 12px; }
.hcol { height: 28px; text-align: center; line-height: 27px; font-size: 16px; color: #444; overflow: hidden; flex: none;
  background: linear-gradient(to bottom, #f0f0f0, #c9c9c9) right / 1px 100% no-repeat; }
.hcol.last span { display: block; width: 88px; }
.hcol.on { height: 29px; color: #1d7044; border-bottom: 2px solid #217346; background: linear-gradient(to bottom, #c6c6c6, #a6a6a6) right / 1px 100% no-repeat #e1e1e1; position: relative; }
.row { display: flex; flex: none; }
.rh { width: 37px; flex: none; border-right: 1px solid #ababab; display: flex; align-items: flex-end; justify-content: center; font-size: 16.5px; letter-spacing: -.4px; color: #444; padding: 0 0 4px 1px;
  background: linear-gradient(to right, #f0f0f0, #c6c6c6) bottom / 100% 1px no-repeat; overflow: hidden; }
.rh.cut { align-items: flex-start; padding-top: 5px; background: none; }
.rh.on { border-right: 2px solid #217346; background: linear-gradient(to right, #c9c9c9, #a6a6a6) bottom / 100% 1px no-repeat #e1e1e1; color: #1d7044; }
.cell { flex: none; border-right: 1px solid #dedede; border-bottom: 1px solid #dedede; background: #fff; display: flex; align-items: center; justify-content: center; font-size: 18px; letter-spacing: -.2px; word-spacing: 2.5px; color: #000; position: relative; padding-bottom: 1px; }
.row:last-child .cell { border-bottom: 0; }
.week { font-weight: 350; }
.sel { background: #c6c6c6; border-color: #ababab; }
.active { border-right-color: #ababab; }
.red { color: #f00; }
.sel.red { color: #c80000; }
.week { background: #d9e1f2; border-color: #d9e1f2; }
.aboveweek { border-bottom-color: #d9e1f2; }
.sel.week { background: #a8afbc; border-color: #a8afbc; }
.sel.aboveweek, .active { border-bottom-color: #a8afbc; }
.err::before { content: ""; position: absolute; left: 0; top: 0; border-top: 7px solid #006100; border-right: 7px solid transparent; }
.ants { position: absolute; left: 35px; top: 109px; }
.selbox { position: absolute; left: 900px; top: 109px; width: 619px; height: 689px; border: 2px solid #217346; box-shadow: inset 0 0 0 1px #fff; }
.selbox i { position: absolute; right: -4px; bottom: -4px; width: 7px; height: 7px; background: #217346; border: 1px solid #fff; }
.vbar { width: 20px; margin: 0 0 -3px 2px; background: #f6f6f6; border-radius: 10px; display: flex; flex-direction: column; align-items: center; padding: 6px 0 6px; height: 990px; }
.vbar i { width: 11px; height: 934px; border-radius: 6px; background: #6f6f6f; margin: 5px 0 21px; }

.sheets { height: 40px; flex: none; border-top: 1px solid #d4d4d4; display: flex; align-items: flex-start; padding-right: 23px; }
.nv { margin: 11px 0 0 31px; }
.n2 { margin-left: 32px; }
.stab { width: 65px; height: 35px; text-align: center; font-size: 18px; line-height: 37px; color: #444; }
.stab.on { width: 79px; margin: -1px 0 0 59px; background: #fff; border: 1px solid #d4d4d4; border-top: 0; border-radius: 0 0 6px 6px; font-size: 17.5px; line-height: 33px; position: relative; letter-spacing: -.5px; color: #222; font-weight: 400; }
.stab.on::after { content: ""; position: absolute; left: 10px; right: 10px; bottom: 3px; height: 2px; background: #107c41; }
.ssep { width: 1px; height: 24px; margin: 7px 0 0 4px; background: #c9c9c9; }
.s2nd { margin-left: 0; }
.plus { margin: 11px 0 0 52px; }
.sdots { margin: 13px 18px 0 0; }
.hbar { width: 703px; height: 21px; margin-top: 8px; border-radius: 10px; background: #f6f6f6; display: flex; align-items: center; padding: 0 6px; }
.hbar i { width: 653px; height: 11px; border-radius: 6px; background: #6f6f6f; margin: 0 13px 0 5px; }

.status { flex: 1; background: #f5f5f5; border-top: 2px solid #fcfcfc; display: flex; align-items: center; font-size: 15.5px; padding: 0 0 1px 14px; letter-spacing: -.55px; word-spacing: 1px; font-weight: 400; }
.msg { font-size: 16px; letter-spacing: 0; word-spacing: 1.2px; font-weight: 350; }
.s1 { width: 134px; } .s2 { width: 53px; margin-left: 23px; } .s3 { width: 108px; margin: 0 26px 0 21px; }
.view { width: 50px; height: 100%; display: grid; place-items: center; }
.view.on { background: #e0e0e0; }
.zoom { margin-left: 6px; }
.pct { margin-left: 14px; width: 62px; }
</style>
